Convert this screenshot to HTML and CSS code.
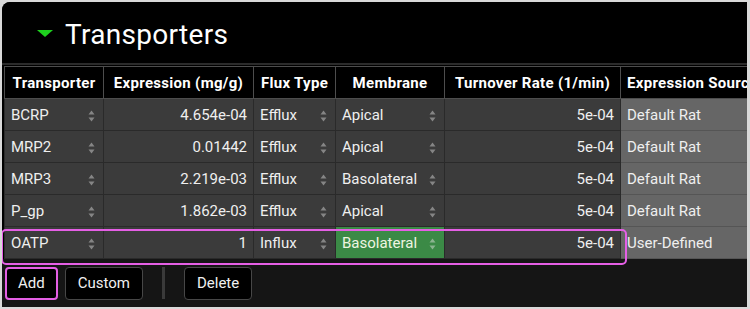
FILE: index.html
```html
<!DOCTYPE html>
<html lang="en">
<head>
    <meta charset="UTF-8">
    <title>Transporters</title>
    <link rel="stylesheet" href="styles.css">
</head>
<body>
  <div class="panel">
    <div class="title-bar">
      <span class="caret"></span>
      <h1>Transporters</h1>
    </div>

    <div class="table-wrap">
      <table class="grid">
        <colgroup>
          <col style="width: 99px">
          <col style="width: 150px">
          <col style="width: 82px">
          <col style="width: 109px">
          <col style="width: 176px">
          <col style="width: 140px">
        </colgroup>
        <thead>
          <tr>
            <th>Transporter</th>
            <th>Expression (mg/g)</th>
            <th>Flux Type</th>
            <th>Membrane</th>
            <th>Turnover Rate (1/min)</th>
            <th>Expression Source</th>
          </tr>
        </thead>
        <tbody id="rows"></tbody>
      </table>
      <div class="row-highlight"></div>
    </div>

    <div class="toolbar">
      <button class="btn marked">Add</button>
      <button class="btn">Custom</button>
      <span class="divider"></span>
      <button class="btn">Delete</button>
    </div>
  </div>

  <script>
    const rows = [
      ['BCRP', '4.654e-04', 'Efflux', 'Apical', '5e-04', 'Default Rat'],
      ['MRP2', '0.01442', 'Efflux', 'Apical', '5e-04', 'Default Rat'],
      ['MRP3', '2.219e-03', 'Efflux', 'Basolateral', '5e-04', 'Default Rat'],
      ['P_gp', '1.862e-03', 'Efflux', 'Apical', '5e-04', 'Default Rat'],
      ['OATP', '1', 'Influx', 'Basolateral', '5e-04', 'User-Defined']
    ];

    const spin = '<svg class="spin" width="7" height="12" viewBox="0 0 7 12"><path d="M3.5 0.5 L6.5 4.5 H0.5 Z M3.5 11.5 L6.5 7.5 H0.5 Z"/></svg>';

    const body = document.getElementById('rows');
    rows.forEach((r, i) => {
      const active = i === rows.length - 1;
      body.insertAdjacentHTML('beforeend', `
        <tr>
          <td class="sel"><span>${r[0]}</span>${spin}</td>
          <td class="num">${r[1]}</td>
          <td class="sel"><span>${r[2]}</span>${spin}</td>
          <td class="sel${active ? ' picked' : ''}"><span>${r[3]}</span>${spin}</td>
          <td class="num">${r[4]}</td>
          <td class="src">${r[5]}</td>
        </tr>`);
    });
  </script>
</body>
</html>
```

FILE: styles.css
```css
body {
    margin: 0;
    background-color: #d9d9d9;
    font-family: Roboto, "Liberation Sans", sans-serif;
    color: #efefef;
}
.panel {
    margin: 2px 3px 0 2px;
    height: 305px;
    background-color: #151515;
    border-top-left-radius: 8px;
    overflow: hidden;
    display: flex;
    flex-direction: column;
}
.title-bar {
    height: 61px;
    background-color: #000;
    border-bottom: 2px solid #2b2b2b;
    display: flex;
    align-items: center;
    padding-left: 35px;
    gap: 12px;
}
.caret {
    width: 0;
    height: 0;
    border-left: 8px solid transparent;
    border-right: 8px solid transparent;
    border-top: 7px solid #1ed01e;
    margin-top: 2px;
}
.title-bar h1 {
    margin: 0;
    padding-top: 3px;
    font-size: 28px;
    font-weight: 400;
    color: #fff;
    letter-spacing: 0.3px;
}
.table-wrap {
    position: relative;
    padding: 1px 0 0 2px;
    background-color: #000;
}
.grid {
    border-collapse: collapse;
    table-layout: fixed;
    width: 756px;
    font-size: 15px;
}
.grid th {
    height: 31px;
    padding: 0 6px;
    background-color: #000;
    border: 1px solid #4d4d4d;
    color: #fff;
    font-weight: 700;
    text-align: center;
    white-space: nowrap;
    overflow: hidden;
    letter-spacing: 0.3px;
}
.grid th:last-child {
    text-align: left;
    padding-left: 6px;
}
.grid td {
    height: 31px;
    padding: 0 6px;
    background-color: #3b3b3b;
    border: 1px solid #2a2a2a;
    white-space: nowrap;
    overflow: hidden;
}
.grid td.sel {
    padding-right: 8px;
}
.grid td.sel span {
    float: left;
}
.spin {
    float: right;
    margin-top: 4px;
    fill: #858585;
}
.grid td.num {
    text-align: right;
    padding-right: 6px;
}
.grid td.src {
    background-color: #666;
    border-color: #555;
    padding-left: 6px;
}
.grid td.picked {
    background-color: #3b8a46;
    color: #eef5e0;
}
.grid td.picked .spin {
    fill: #8bb48f;
}
.row-highlight {
    position: absolute;
    left: -1px;
    top: 164px;
    width: 622px;
    height: 32px;
    border: 2px solid #e55fe5;
    border-radius: 5px;
    pointer-events: none;
}
.toolbar {
    flex: 1;
    display: flex;
    align-items: center;
    padding: 0 3px;
    gap: 7px;
}
.btn {
    height: 33px;
    padding: 0 12px;
    background-color: #000;
    border: 1px solid #474747;
    border-radius: 4px;
    color: #f0f0f0;
    font-family: Roboto, "Liberation Sans", sans-serif;
    font-size: 15px;
}
.btn.marked {
    border: 2px solid #e55fe5;
    padding: 0 11px;
}
.divider {
    width: 3px;
    height: 32px;
    margin: 0 12px;
    background-color: #3a3a3a;
}
```
